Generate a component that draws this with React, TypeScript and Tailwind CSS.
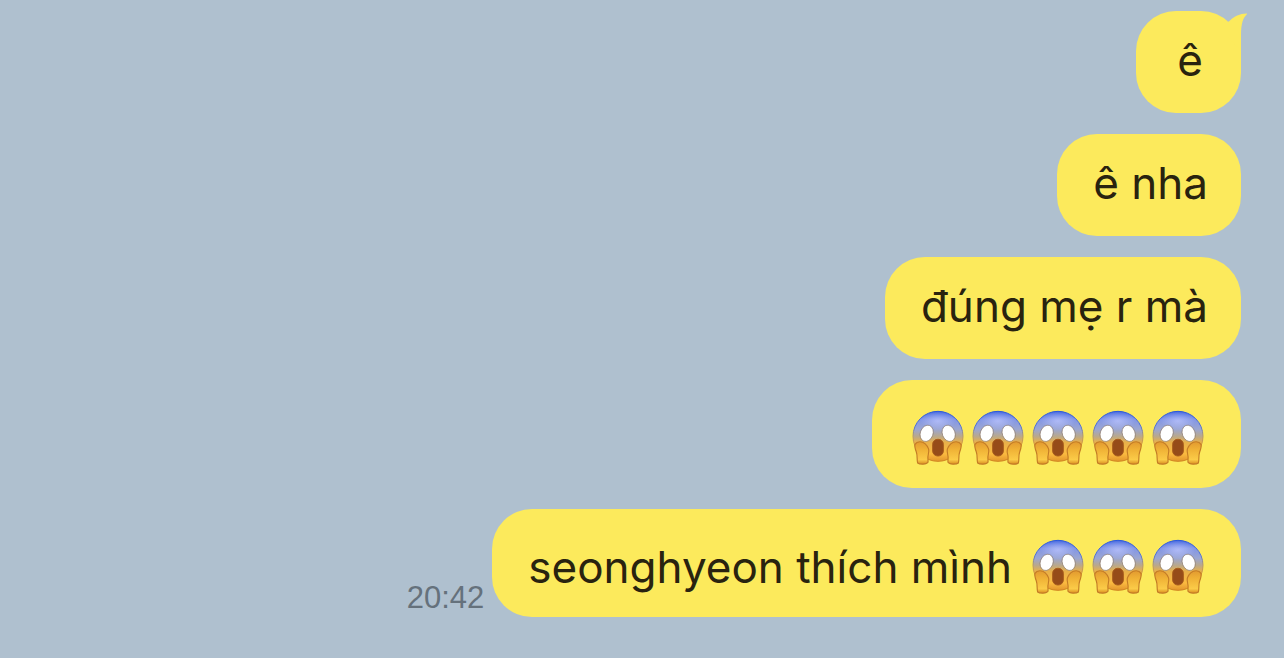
import type { ReactNode } from "react";

function ScreamEmoji() {
  return (
    <svg role="img" aria-label="😱" viewBox="0 0 180 186" className="block h-[62px] w-[60px] shrink-0">
      <defs>
        <linearGradient id="face" x1="0" y1="0" x2="0" y2="1">
          <stop offset="0" stopColor="#4468e0" />
          <stop offset="0.16" stopColor="#8396e6" />
          <stop offset="0.36" stopColor="#9ba6d2" />
          <stop offset="0.5" stopColor="#b9a88c" />
          <stop offset="0.62" stopColor="#e8b04a" />
          <stop offset="0.85" stopColor="#fbba40" />
          <stop offset="1" stopColor="#e2942c" />
        </linearGradient>
        <linearGradient id="rim" x1="0" y1="0" x2="0" y2="1">
          <stop offset="0" stopColor="#2856dc" />
          <stop offset="0.3" stopColor="#4c70dc" />
          <stop offset="0.5" stopColor="#b59768" />
          <stop offset="0.75" stopColor="#e0942c" />
          <stop offset="1" stopColor="#d08420" />
        </linearGradient>
        <radialGradient id="shine" cx="0.5" cy="0.5" r="0.5">
          <stop offset="0" stopColor="#c0c8ff" stopOpacity="0.7" />
          <stop offset="1" stopColor="#c0c8ff" stopOpacity="0" />
        </radialGradient>
        <linearGradient id="hand" x1="0" y1="0" x2="0" y2="1">
          <stop offset="0" stopColor="#e29a30" />
          <stop offset="0.35" stopColor="#f0b236" />
          <stop offset="0.8" stopColor="#fbcb48" />
          <stop offset="1" stopColor="#d98d20" />
        </linearGradient>
      </defs>
      <circle cx="90" cy="88" r="75" fill="url(#face)" stroke="url(#rim)" strokeWidth="3" />
      <ellipse cx="90" cy="42" rx="52" ry="28" fill="url(#shine)" />
      <rect x="74" y="97" width="32" height="50" rx="15" fill="#964c19" stroke="#a85c1c" strokeWidth="3" />
      <g fill="url(#hand)" stroke="#c47c26" strokeWidth="3.5" strokeLinejoin="round">
        <path d="M21 112C27 102 42 102 51 110C60 118 65 129 61 142C58 151 61 160 60 166C56 173 35 173 29 168C26 158 29 146 25 135C22 127 19 119 21 112Z" />
        <path d="M159 112C153 102 138 102 129 110C120 118 115 129 119 142C122 151 119 160 120 166C124 173 145 173 151 168C154 158 151 146 155 135C158 127 161 119 159 112Z" />
      </g>
      <g stroke="#755f50" strokeOpacity="0.6" strokeWidth="2.5" fill="#fff">
        <ellipse cx="56" cy="79" rx="19" ry="25" transform="rotate(20 56 79)" />
        <ellipse cx="122" cy="79" rx="19" ry="25" transform="rotate(-20 122 79)" />
      </g>
    </svg>
  );
}

function Emojis({ count }: { count: number }) {
  return (
    <span className="flex">
      {Array.from({ length: count }, (_, i) => (
        <ScreamEmoji key={i} />
      ))}
    </span>
  );
}

function Tail() {
  return (
    <svg aria-hidden="true" viewBox="0 0 20 40" className="absolute top-0 -right-[7px] h-[40px] w-[20px]">
      <path d="M0 11L2 9.500C6 5.500 12 2.500 18.500 2.500C19 2.500 19.200 3 18.700 3.400C15.500 6 13 12 13 24V40L0 26Z" fill="#fcea5c" />
    </svg>
  );
}

function Bubble({ children, tail, tall }: { children: ReactNode; tail?: boolean; tall?: boolean }) {
  return (
    <div
      className={`relative flex min-w-[105px] items-center justify-center rounded-[40px] bg-[#fcea5c] pr-[33px] pl-9 text-[44px] leading-[62px] text-[#29230f] ${
        tall ? "pt-[27px] pb-[19px]" : "pt-[18px] pb-[22px]"
      }`}
    >
      {children}
      {tail && <Tail />}
    </div>
  );
}

export default function App() {
  return (
    <main className="min-h-screen bg-[#afc0cf] pt-[11px] pr-[43px] pb-10 pl-4 font-['Inter','Noto_Sans',sans-serif]">
      <ul className="flex flex-col items-end gap-[21px]">
        <li>
          <Bubble tail>ê</Bubble>
        </li>
        <li>
          <Bubble>ê nha</Bubble>
        </li>
        <li>
          <Bubble>đúng mẹ r mà</Bubble>
        </li>
        <li>
          <Bubble tall>
            <Emojis count={5} />
          </Bubble>
        </li>
        <li className="flex items-end gap-2">
          <time className="font-['Liberation_Sans',sans-serif] text-[31px] leading-[38px] text-[#65717c]">20:42</time>
          <Bubble tall>
            <span className="mr-4">seonghyeon thích mình</span>
            <Emojis count={3} />
          </Bubble>
        </li>
      </ul>
    </main>
  );
}
